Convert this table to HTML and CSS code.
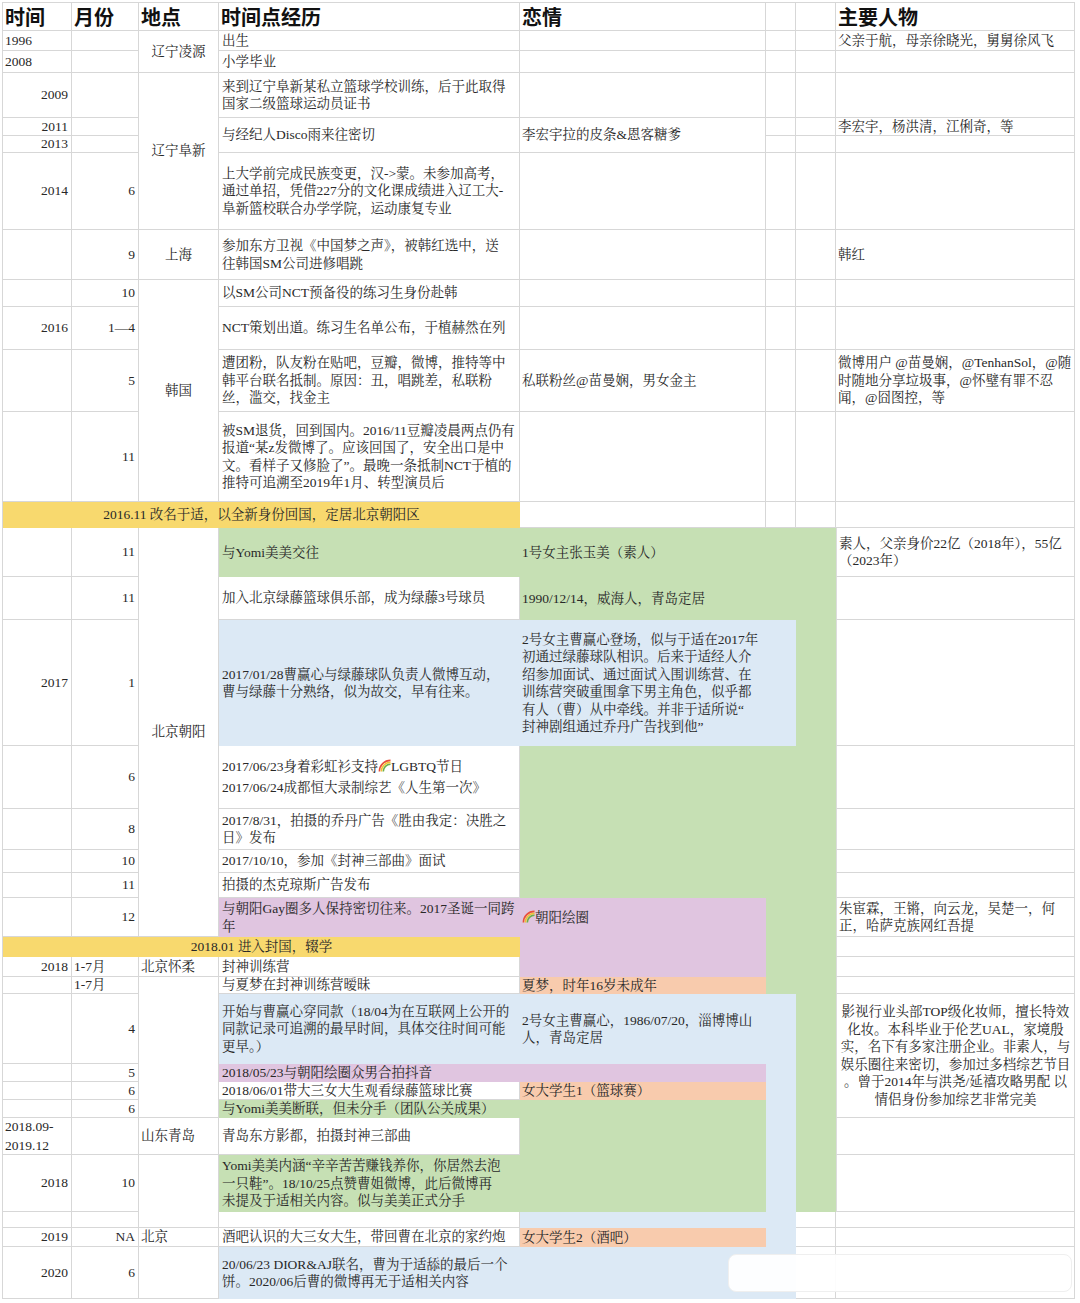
FILE: index.html
```html
<!DOCTYPE html>
<html lang="zh-CN">
<head>
<meta charset="utf-8">
<title>时间线</title>
<link rel="stylesheet" href="styles.css">
</head>
<body>
<div class="page">
<div class="sheet">
<!-- coloured blocks -->
<div class="yl ca x4 r13 m"><p>2016.11 改名于适，以全新身份回国，定居北京朝阳区</p></div>
<div class="yl ca x4 r22 m"><p>2018.01 进入封国，辍学</p></div>
<div class="gr cd r14 p"><p>与Yomi美美交往</p></div>
<div class="gr ce x3 r14 y2"></div>
<div class="bl cd x3 r16"></div>
<div class="gr cg r16"></div>
<div class="gr ce x3 r17 y4"></div>
<div class="pk cd r21 p"><p>与朝阳Gay圈多人保持密切往来。2017圣诞一同跨<br>年</p></div>
<div class="pk ce r21 y3"></div>
<div class="gr cf x2 r21 y4"></div>
<div class="or ce r24 q"><p>夏梦，时年16岁未成年</p></div>
<div class="bl cd x3 r25"></div>
<div class="gr cg r25 y6"></div>
<div class="pk cd x2 r26"></div>
<div class="bl cf r26 y8"></div>
<div class="or ce r27 q"><p>女大学生1（篮球赛）</p></div>
<div class="gr cd r28 p"><p>与Yomi美美断联，但未分手（团队公关成果）</p></div>
<div class="gr ce r28 y3"></div>
<div class="gr cd r30 p"><p>Yomi美美内涵“辛辛苦苦赚钱养你，你居然去泡<br>一只鞋”。18/10/25点赞曹姐微博，此后微博再<br>未提及于适相关内容。似与美美正式分手</p></div>
<div class="bl ce r31"></div>
<div class="or ce r32 q"><p>女大学生2（酒吧）</p></div>
<div class="bl cd r33 p"><p>20/06/23 DIOR&amp;AJ联名，曹为于适舔的最后一个<br>饼。2020/06后曹的微博再无于适相关内容</p></div>
<div class="bl ce r33"></div>

<!-- text over coloured blocks -->
<div class="t ce r14 q"><p>1号女主张玉美（素人）</p></div>
<div class="t ce r15 q"><p>1990/12/14，威海人，青岛定居</p></div>
<div class="t cd r16 p"><p>2017/01/28曹赢心与绿藤球队负责人微博互动，<br>曹与绿藤十分熟络，似为故交，早有往来。</p></div>
<div class="t ce x2 r16 q"><p>2号女主曹赢心登场，似与于适在2017年<br>初通过绿藤球队相识。后来于适经人介<br>绍参加面试、通过面试入围训练营、在<br>训练营突破重围拿下男主角色，似乎都<br>有人（曹）从中牵线。并非于适所说“<br>封神剧组通过乔丹广告找到他”</p></div>
<div class="t ce r21 q"><p><svg class="rb" viewBox="0 0 14 14" width="13" height="13"><path d="M1.5 13.5A12 12 0 0 1 13.5 1.5" stroke="#e8503c" stroke-width="1.7" fill="none"/><path d="M3.6 13.5A9.9 9.9 0 0 1 13.5 3.6" stroke="#f2c230" stroke-width="1.7" fill="none"/><path d="M5.7 13.5A7.8 7.8 0 0 1 13.5 5.7" stroke="#6cb04a" stroke-width="1.7" fill="none"/></svg>朝阳绘圈</p></div>
<div class="t cd r25 p"><p>开始与曹赢心穿同款（18/04为在互联网上公开的<br>同款记录可追溯的最早时间，具体交往时间可能<br>更早。）</p></div>
<div class="t ce x2 r25 q"><p>2号女主曹赢心，1986/07/20，淄博博山<br>人，青岛定居</p></div>
<div class="t cd r26 p"><p>2018/05/23与朝阳绘圈众男合拍抖音</p></div>

<!-- header -->
<div class="w hd ca r1"><p>时间</p></div>
<div class="w hd cb r1"><p>月份</p></div>
<div class="w hd cc r1"><p>地点</p></div>
<div class="w hd cd r1"><p>时间点经历</p></div>
<div class="w hd ce r1"><p>恋情</p></div>
<div class="w cf r1"></div>
<div class="w cg r1"></div>
<div class="w hd ch r1"><p>主要人物</p></div>

<!-- column A -->
<div class="w ca r2 l"><p>1996</p></div>
<div class="w ca r3 l"><p>2008</p></div>
<div class="w ca r4 r"><p>2009</p></div>
<div class="w ca r5 r"><p>2011</p></div>
<div class="w ca r6 r"><p>2013</p></div>
<div class="w ca r7 r"><p>2014</p></div>
<div class="w ca r8"></div>
<div class="w ca r9"></div>
<div class="w ca r10 r"><p>2016</p></div>
<div class="w ca r11"></div>
<div class="w ca r12"></div>
<div class="w ca r14"></div>
<div class="w ca r15"></div>
<div class="w ca r16 r"><p>2017</p></div>
<div class="w ca r17"></div>
<div class="w ca r18"></div>
<div class="w ca r19"></div>
<div class="w ca r20"></div>
<div class="w ca r21"></div>
<div class="w ca r23 r"><p>2018</p></div>
<div class="w ca r24"></div>
<div class="w ca r25"></div>
<div class="w ca r26"></div>
<div class="w ca r27"></div>
<div class="w ca r28"></div>
<div class="w ca r29 l lh19"><p>2018.09-<br>2019.12</p></div>
<div class="w ca r30 r"><p>2018</p></div>
<div class="w ca r31"></div>
<div class="w ca r32 r"><p>2019</p></div>
<div class="w ca r33 r"><p>2020</p></div>

<!-- column B -->
<div class="w cb r2"></div>
<div class="w cb r3"></div>
<div class="w cb r4"></div>
<div class="w cb r5"></div>
<div class="w cb r6"></div>
<div class="w cb r7 r"><p>6</p></div>
<div class="w cb r8 r"><p>9</p></div>
<div class="w cb r9 r"><p>10</p></div>
<div class="w cb r10 r"><p>1—4</p></div>
<div class="w cb r11 r"><p>5</p></div>
<div class="w cb r12 r"><p>11</p></div>
<div class="w cb r14 r"><p>11</p></div>
<div class="w cb r15 r"><p>11</p></div>
<div class="w cb r16 r"><p>1</p></div>
<div class="w cb r17 r"><p>6</p></div>
<div class="w cb r18 r"><p>8</p></div>
<div class="w cb r19 r"><p>10</p></div>
<div class="w cb r20 r"><p>11</p></div>
<div class="w cb r21 r"><p>12</p></div>
<div class="w cb r23 l"><p>1-7月</p></div>
<div class="w cb r24 l"><p>1-7月</p></div>
<div class="w cb r25 r"><p>4</p></div>
<div class="w cb r26 r"><p>5</p></div>
<div class="w cb r27 r"><p>6</p></div>
<div class="w cb r28 r"><p>6</p></div>
<div class="w cb r29"></div>
<div class="w cb r30 r"><p>10</p></div>
<div class="w cb r31"></div>
<div class="w cb r32 r"><p>NA</p></div>
<div class="w cb r33 r"><p>6</p></div>

<!-- column C -->
<div class="w cc r2 y2 m"><p>辽宁凌源</p></div>
<div class="w cc r4 y4 m"><p>辽宁阜新</p></div>
<div class="w cc r8 m"><p>上海</p></div>
<div class="w cc r9 y4 m"><p>韩国</p></div>
<div class="w cc r14 y8 m"><p>北京朝阳</p></div>
<div class="w cc r23 l"><p>北京怀柔</p></div>
<div class="w cc r24 y5"></div>
<div class="w cc r29 l"><p>山东青岛</p></div>
<div class="w cc r30 y2"></div>
<div class="w cc r32 l"><p>北京</p></div>
<div class="w cc r33"></div>

<!-- column D -->
<div class="w cd r2 p"><p>出生</p></div>
<div class="w cd r3 p"><p>小学毕业</p></div>
<div class="w cd r4 p"><p>来到辽宁阜新某私立篮球学校训练，后于此取得<br>国家二级篮球运动员证书</p></div>
<div class="w cd r5 y2 p"><p>与经纪人Disco雨来往密切</p></div>
<div class="w cd r7 p"><p>上大学前完成民族变更，汉-&gt;蒙。未参加高考，<br>通过单招，凭借227分的文化课成绩进入辽工大-<br>阜新篮校联合办学学院，运动康复专业</p></div>
<div class="w cd r8 p"><p>参加东方卫视《中国梦之声》，被韩红选中，送<br>往韩国SM公司进修唱跳</p></div>
<div class="w cd r9 p"><p>以SM公司NCT预备役的练习生身份赴韩</p></div>
<div class="w cd r10 p"><p>NCT策划出道。练习生名单公布，于植赫然在列</p></div>
<div class="w cd r11 p"><p>遭团粉，队友粉在贴吧，豆瓣，微博，推特等中<br>韩平台联名抵制。原因：丑，唱跳差，私联粉<br>丝，滥交，找金主</p></div>
<div class="w cd r12 p"><p>被SM退货，回到国内。2016/11豆瓣凌晨两点仍有<br>报道“某z发微博了。应该回国了，安全出口是中<br>文。看样子又修脸了”。最晚一条抵制NCT于植的<br>推特可追溯至2019年1月、转型演员后</p></div>
<div class="w cd r15 p"><p>加入北京绿藤篮球俱乐部，成为绿藤3号球员</p></div>
<div class="w cd r17 p lh21"><p>2017/06/23身着彩虹衫支持<svg class="rb" viewBox="0 0 14 14" width="13" height="13"><path d="M1.5 13.5A12 12 0 0 1 13.5 1.5" stroke="#e8503c" stroke-width="1.7" fill="none"/><path d="M3.6 13.5A9.9 9.9 0 0 1 13.5 3.6" stroke="#f2c230" stroke-width="1.7" fill="none"/><path d="M5.7 13.5A7.8 7.8 0 0 1 13.5 5.7" stroke="#6cb04a" stroke-width="1.7" fill="none"/></svg>LGBTQ节日<br>2017/06/24成都恒大录制综艺《人生第一次》</p></div>
<div class="w cd r18 p"><p>2017/8/31，拍摄的乔丹广告《胜由我定：决胜之<br>日》发布</p></div>
<div class="w cd r19 p"><p>2017/10/10，参加《封神三部曲》面试</p></div>
<div class="w cd r20 p"><p>拍摄的杰克琼斯广告发布</p></div>
<div class="w cd r23 p"><p>封神训练营</p></div>
<div class="w cd r24 p"><p>与夏梦在封神训练营暧昧</p></div>
<div class="w cd r27 p"><p>2018/06/01带大三女大生观看绿藤篮球比赛</p></div>
<div class="w cd r29 p"><p>青岛东方影都，拍摄封神三部曲</p></div>
<div class="w cd r31"></div>
<div class="w cd r32 p"><p>酒吧认识的大三女大生，带回曹在北京的家约炮</p></div>

<!-- column E -->
<div class="w ce r2"></div>
<div class="w ce r3"></div>
<div class="w ce r4"></div>
<div class="w ce r5 y2 q"><p>李宏宇拉的皮条&amp;恩客糖爹</p></div>
<div class="w ce r7"></div>
<div class="w ce r8"></div>
<div class="w ce r9"></div>
<div class="w ce r10"></div>
<div class="w ce r11 q"><p>私联粉丝@苗曼娴，男女金主</p></div>
<div class="w ce r12"></div>
<div class="w ce r13"></div>

<!-- column F -->
<div class="w cf r2"></div><div class="w cf r3"></div><div class="w cf r4"></div><div class="w cf r5"></div>
<div class="w cf r6"></div><div class="w cf r7"></div><div class="w cf r8"></div><div class="w cf r9"></div>
<div class="w cf r10"></div><div class="w cf r11"></div><div class="w cf r12"></div><div class="w cf r13"></div>

<!-- column G -->
<div class="w cg r2"></div><div class="w cg r3"></div><div class="w cg r4"></div><div class="w cg r5"></div>
<div class="w cg r6"></div><div class="w cg r7"></div><div class="w cg r8"></div><div class="w cg r9"></div>
<div class="w cg r10"></div><div class="w cg r11"></div><div class="w cg r12"></div><div class="w cg r13"></div>
<div class="w cg r31"></div><div class="w cg r32"></div><div class="w cg r33"></div>

<!-- column H -->
<div class="w ch r2 q"><p>父亲于航，母亲徐晓光，舅舅徐风飞</p></div>
<div class="w ch r3"></div>
<div class="w ch r4"></div>
<div class="w ch r5 q"><p>李宏宇，杨洪清，江俐奇，等</p></div>
<div class="w ch r6"></div>
<div class="w ch r7"></div>
<div class="w ch r8 q"><p>韩红</p></div>
<div class="w ch r9"></div>
<div class="w ch r10"></div>
<div class="w ch r11 q"><p>微博用户 @苗曼娴，@TenhanSol，@随<br>时随地分享垃圾事，@怀璧有罪不忍<br>闻，@囧图控，等</p></div>
<div class="w ch r12"></div>
<div class="w ch r13"></div>
<div class="w ch r14 q lb"><p>素人，父亲身价22亿（2018年），55亿<br>（2023年）</p></div>
<div class="w ch r15 lb"></div>
<div class="w ch r16 lb"></div>
<div class="w ch r17 lb"></div>
<div class="w ch r18 lb"></div>
<div class="w ch r19 lb"></div>
<div class="w ch r20 lb"></div>
<div class="w ch r21 q lb"><p>朱宦霖，王锵，向云龙，吴楚一，何<br>正，哈萨克族网红吾提</p></div>
<div class="w ch r22 lb"></div>
<div class="w ch r23 lb"></div>
<div class="w ch r24 lb"></div>
<div class="w ch r25 y4 m lb"><p>影视行业头部TOP级化妆师，擅长特效<br>化妆。本科毕业于伦艺UAL，家境殷<br>实，名下有多家注册企业。非素人，与<br>娱乐圈往来密切，参加过多档综艺节目<br>。曾于2014年与洪尧/延禧攻略男配 以<br>情侣身份参加综艺非常完美</p></div>
<div class="w ch r29 lb"></div>
<div class="w ch r30 lb"></div>
<div class="w ch r31"></div>
<div class="w ch r32"></div>
<div class="w ch r33"></div>
</div>
<div class="mark"></div>
</div>
</body>
</html>
```

FILE: styles.css
```css
* { box-sizing: border-box; margin: 0; padding: 0; }

html, body { background: #ffffff; }

body {
  width: 1080px;
  height: 1303px;
  overflow: hidden;
  font-family: "Liberation Serif", "Noto Serif CJK SC", "Noto Sans CJK SC", serif;
  font-size: 13.5px;
  line-height: 17.5px;
  color: #282828;
}

.page {
  position: relative;
  padding: 2px 0 0 2px;
  height: 1303px;
}

.sheet {
  display: grid;
  width: 1073px;
  grid-template-columns: 69px 67px 80px 301px 246px 30px 40px 239px;
  grid-template-rows: 28px 20px 22px 45px 18px 17px 77px 50px 27px 43px 62px 90px 26px 49px 43px 126px 63px 41px 23px 25px 39px 20px 20px 17px 70px 18px 18px 18px 37px 57px 16px 19px 52px;
  border-top: 1px solid #d7d7d7;
  border-left: 1px solid #d7d7d7;
}

.sheet > div {
  display: flex;
  align-items: center;
  min-width: 0;
}

.sheet p { white-space: nowrap; }

/* cell kinds */
.w {
  background: #ffffff;
  border-right: 1px solid #d7d7d7;
  border-bottom: 1px solid #d7d7d7;
}
.lb { border-left: 1px solid #dcdcdc; }
.t { background: transparent; }

.yl { background: #f8d96e; }
.gr { background: #c6e0b4; }
.bl { background: #dce9f5; }
.pk { background: #e0c5e0; }
.or { background: #f8cbad; }

/* alignment */
.l { padding-left: 2px; }
.r { justify-content: flex-end; padding-right: 3px; }
.m { justify-content: center; text-align: center; }
.p { padding-left: 3px; }
.q { padding-left: 2px; }
.lh19 { line-height: 19px; }
.lh21 { line-height: 21px; }

.hd {
  font-family: "Noto Sans CJK SC", "Liberation Sans", sans-serif;
  font-weight: 700;
  font-size: 20px;
  line-height: 24px;
  color: #111111;
  padding-left: 2px;
}

.rb { vertical-align: -1px; }

/* columns */
.ca { grid-column-start: 1; }
.cb { grid-column-start: 2; }
.cc { grid-column-start: 3; }
.cd { grid-column-start: 4; }
.ce { grid-column-start: 5; }
.cf { grid-column-start: 6; }
.cg { grid-column-start: 7; }
.ch { grid-column-start: 8; }
.x2 { grid-column-end: span 2; }
.x3 { grid-column-end: span 3; }
.x4 { grid-column-end: span 4; }

/* rows */
.r1 { grid-row-start: 1; }
.r2 { grid-row-start: 2; }
.r3 { grid-row-start: 3; }
.r4 { grid-row-start: 4; }
.r5 { grid-row-start: 5; }
.r6 { grid-row-start: 6; }
.r7 { grid-row-start: 7; }
.r8 { grid-row-start: 8; }
.r9 { grid-row-start: 9; }
.r10 { grid-row-start: 10; }
.r11 { grid-row-start: 11; }
.r12 { grid-row-start: 12; }
.r13 { grid-row-start: 13; }
.r14 { grid-row-start: 14; }
.r15 { grid-row-start: 15; }
.r16 { grid-row-start: 16; }
.r17 { grid-row-start: 17; }
.r18 { grid-row-start: 18; }
.r19 { grid-row-start: 19; }
.r20 { grid-row-start: 20; }
.r21 { grid-row-start: 21; }
.r22 { grid-row-start: 22; }
.r23 { grid-row-start: 23; }
.r24 { grid-row-start: 24; }
.r25 { grid-row-start: 25; }
.r26 { grid-row-start: 26; }
.r27 { grid-row-start: 27; }
.r28 { grid-row-start: 28; }
.r29 { grid-row-start: 29; }
.r30 { grid-row-start: 30; }
.r31 { grid-row-start: 31; }
.r32 { grid-row-start: 32; }
.r33 { grid-row-start: 33; }
.y2 { grid-row-end: span 2; }
.y3 { grid-row-end: span 3; }
.y4 { grid-row-end: span 4; }
.y5 { grid-row-end: span 5; }
.y6 { grid-row-end: span 6; }
.y8 { grid-row-end: span 8; }

/* faint watermark box over the bottom-right corner */
.mark {
  position: absolute;
  left: 728px;
  top: 1254px;
  width: 344px;
  height: 38px;
  background: rgba(255, 255, 255, 0.93);
  border: 1px solid #efefef;
  border-radius: 8px;
}
```
